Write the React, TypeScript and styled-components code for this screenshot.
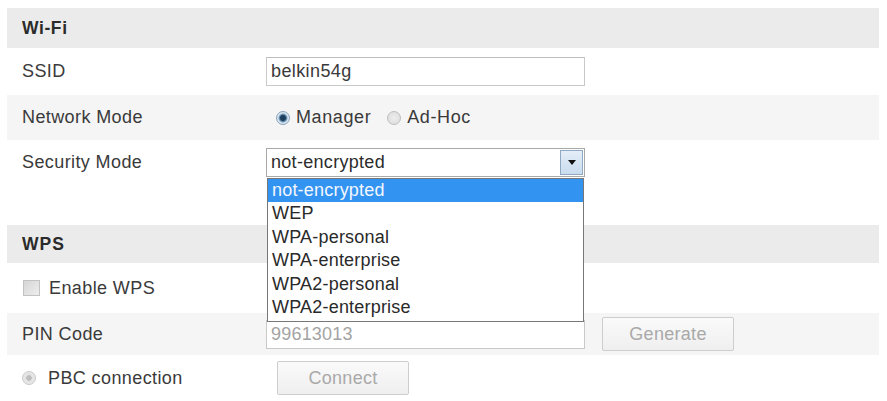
import React from "react";
import styled, { createGlobalStyle } from "styled-components";

const Global = createGlobalStyle`
  html, body { margin: 0; padding: 0; background: #fff; }
  body { font-family: "Liberation Sans", Arial, sans-serif; color: #3a3a3a; }
`;

const Page = styled.div`
  padding: 8px 8px 0 7px;
  width: 872px;
`;

const Header = styled.div<{ h: number; spacing: number }>`
  height: ${(p) => p.h}px;
  background: #ebebeb;
  display: flex;
  align-items: center;
  padding-left: 15px;
  font-size: 17.5px;
  font-weight: bold;
  color: #2b2b2b;
  letter-spacing: ${(p) => p.spacing}px;
`;

const Row = styled.div<{ h: number; shade?: boolean; raised?: boolean }>`
  height: ${(p) => p.h}px;
  background: ${(p) => (p.shade ? "#f5f5f5" : "#fff")};
  display: flex;
  align-items: center;
  padding-left: 15px;
  font-size: 18px;
  letter-spacing: 0.4px;
  position: relative;
  z-index: ${(p) => (p.raised ? 3 : "auto")};
`;

const Label = styled.div`
  width: 244px;
  flex: none;
  display: flex;
  align-items: center;
  gap: 9px;
`;

const Control = styled.div`
  display: flex;
  align-items: center;
  position: relative;
`;

const TextBox = styled.div<{ muted?: boolean }>`
  width: 313px;
  height: 27px;
  border: 1px solid #c9c9c9;
  border-top-color: #bdbdbd;
  background: #fff;
  display: flex;
  align-items: center;
  padding-left: 4px;
  font-size: 18px;
  letter-spacing: ${(p) => (p.muted ? "0.2px" : "0.4px")};
  color: ${(p) => (p.muted ? "#a3a3a3" : "#3a3a3a")};
`;

const SelectBox = styled.div`
  width: 317px;
  height: 27px;
  border: 1px solid #a9a9a9;
  background: #fff;
  display: flex;
  align-items: center;
  position: relative;
`;

const SelectText = styled.div`
  flex: 1;
  padding-left: 4px;
  font-size: 18px;
  letter-spacing: 0.3px;
  color: #2c2c2c;
`;

const ArrowBtn = styled.div`
  width: 23px;
  height: 25px;
  margin-right: 1px;
  border: 1px solid #8fa9c2;
  background: linear-gradient(#e4eef8, #c9dcee);
  display: flex;
  align-items: center;
  justify-content: center;
  box-sizing: border-box;
`;

const Triangle = styled.div`
  width: 0;
  height: 0;
  border-left: 4px solid transparent;
  border-right: 4px solid transparent;
  border-top: 5px solid #111;
`;

const List = styled.div`
  position: absolute;
  left: 0;
  top: 29px;
  width: 317px;
  border: 1px solid #777;
  background: #fff;
  z-index: 5;
  box-sizing: border-box;
  padding-bottom: 2px;
`;

const Option = styled.div<{ active?: boolean }>`
  height: 23.4px;
  line-height: 23px;
  padding-left: 4px;
  font-size: 18px;
  letter-spacing: 0.2px;
  color: ${(p) => (p.active ? "#f2f7ff" : "#2a2a2a")};
  background: ${(p) => (p.active ? "#3393f0" : "transparent")};
`;

const RadioGroup = styled.div`
  display: flex;
  align-items: center;
  margin-left: 10px;
  gap: 6px;
`;

const Radio = styled.span<{ on?: boolean; disabled?: boolean }>`
  width: 14px;
  height: 14px;
  border-radius: 50%;
  box-sizing: border-box;
  border: 1px solid ${(p) => (p.disabled ? "#c8c8c8" : p.on ? "#8aa2b8" : "#bdbdbd")};
  background: ${(p) =>
    p.disabled
      ? "radial-gradient(circle, #bdbdbd 0 2.5px, #e2e2e2 3px, #ececec)"
      : p.on
      ? "radial-gradient(circle, #1d3f5c 0 2.5px, #5d86a8 3.5px, #d9e6f1 5px)"
      : "radial-gradient(circle, #ececec, #dcdcdc)"};
  flex: none;
`;

const RadioLabel = styled.span`
  margin-right: 10px;
  letter-spacing: 0.6px;
`;

const Check = styled.span`
  width: 17px;
  height: 16px;
  border: 1px solid #c2c2c2;
  background: linear-gradient(135deg, #d6d6d6, #eeeeee);
  box-sizing: border-box;
  flex: none;
  margin-left: 1px;
`;

const Button = styled.div<{ w: number; ml: number }>`
  width: ${(p) => p.w}px;
  height: 34px;
  margin-left: ${(p) => p.ml}px;
  box-sizing: border-box;
  border: 1px solid #cdcdcd;
  border-radius: 2px;
  background: linear-gradient(#fafafa, #efefef);
  color: #a9a9a9;
  font-size: 18px;
  letter-spacing: 0.3px;
  display: flex;
  align-items: center;
  justify-content: center;
`;

const PbcText = styled.span`
  margin-left: 3px;
`;

const options = [
  "not-encrypted",
  "WEP",
  "WPA-personal",
  "WPA-enterprise",
  "WPA2-personal",
  "WPA2-enterprise",
];

export default function App() {
  return (
    <>
      <Global />
      <Page>
        <Header h={40} spacing={0.6}>Wi-Fi</Header>
        <Row h={47}>
          <Label>SSID</Label>
          <Control>
            <TextBox>belkin54g</TextBox>
          </Control>
        </Row>
        <Row h={45} shade>
          <Label>Network Mode</Label>
          <RadioGroup>
            <Radio on />
            <RadioLabel>Manager</RadioLabel>
            <Radio />
            <RadioLabel>Ad-Hoc</RadioLabel>
          </RadioGroup>
        </Row>
        <Row h={45} raised>
          <Label>Security Mode</Label>
          <Control>
            <SelectBox>
              <SelectText>not-encrypted</SelectText>
              <ArrowBtn>
                <Triangle />
              </ArrowBtn>
              <List>
                {options.map((o, i) => (
                  <Option key={o} active={i === 0}>
                    {o}
                  </Option>
                ))}
              </List>
            </SelectBox>
          </Control>
        </Row>
        <Row h={40} />
        <Header h={38} spacing={1}>WPS</Header>
        <Row h={50}>
          <Label>
            <Check />
            Enable WPS
          </Label>
        </Row>
        <Row h={42} shade>
          <Label>PIN Code</Label>
          <Control>
            <TextBox muted>99613013</TextBox>
            <Button w={132} ml={17}>Generate</Button>
          </Control>
        </Row>
        <Row h={46}>
          <Label>
            <Radio disabled on />
            <PbcText>PBC connection</PbcText>
          </Label>
          <Button w={132} ml={11}>Connect</Button>
        </Row>
      </Page>
    </>
  );
}
